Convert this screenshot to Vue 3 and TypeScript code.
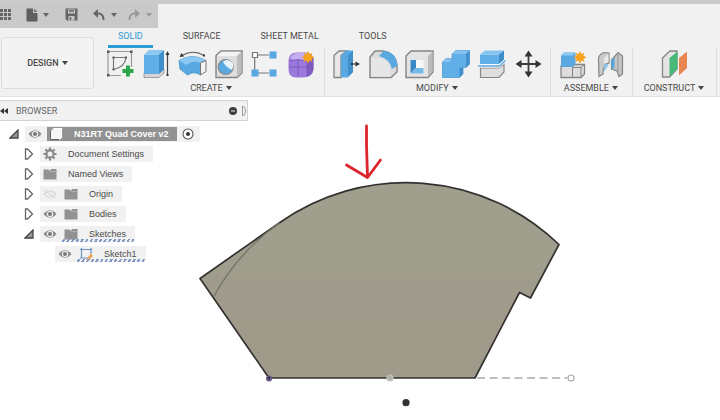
<script setup lang="ts">
import { ref } from 'vue'

interface Shape {
  d: string
  fill?: string
  stroke?: string
  w?: number
}
interface Tool {
  name: string
  shapes: Shape[]
}
interface Group {
  label: string
  tools: Tool[]
}
interface Node {
  label: string
  level: number
  open?: boolean
  leaf?: boolean
  eye?: 'on' | 'off'
  icon: 'part' | 'gear' | 'folder' | 'sketch'
  root?: boolean
  hatched?: boolean
}

const star = 'M25 2l1.6 3 3-1.3-1.2 3 3.1 1.6-3.1 1.6 1.2 3-3-1.3-1.6 3.1-1.6-3.1-3 1.3 1.2-3-3.1-1.6 3.1-1.6-1.2-3 3 1.3z'
const edge = '#858585'

const groups: Group[] = [
  {
    label: 'CREATE',
    tools: [
      {
        name: 'Create sketch',
        shapes: [
          { d: 'M5 2.5H28.500V18M5 2.500V26.500H18', stroke: '#9a9a9a' },
          { d: 'M10.500 8.500H23Q22 18 10.500 20.500Z', stroke: '#777' },
          { d: 'M4 1.500h2.500v2.500H4zM27 1.500h2.500v2.500H27zM4 25h2.500v2.500H4zM9.500 7.500h2v2h-2zM22 7.500h2v2h-2zM9.500 19.500h2v2h-2z', fill: '#555' },
          { d: 'M23 16.500h4V20h3.500v4H27v3.500h-4V24h-3.500v-4H23z', fill: '#2aa84a' }
        ]
      },
      {
        name: 'Extrude',
        shapes: [
          { d: 'M5 24H20L25 20V24L20 28.500H5Z', fill: '#d5d5d5', stroke: '#8c8c8c', w: 0.8 },
          { d: 'M5 5.500H20V25H5Z', fill: '#62aee6' },
          { d: 'M5 5.500L10 1H25L20 5.500Z', fill: '#8cc8f2' },
          { d: 'M20 5.500L25 1V20.500L20 25Z', fill: '#3f8fcb' },
          { d: 'M28.500 5V26', stroke: '#444' },
          { d: 'M28.500 2l2 4h-4zM27.500 25h2v2h-2z', fill: '#333' }
        ]
      },
      {
        name: 'Revolve',
        shapes: [
          { d: 'M7 6.500Q18 0 29 6.500', stroke: '#555' },
          { d: 'M4.500 8l2-4 2.500 3.500zM28 5.500h2v2h-2z', fill: '#333' },
          { d: 'M4 11.500Q17 3.500 31 11.500L25.500 14V26Q19 21.500 12.500 26L5 20Z', fill: '#5aa8e1', stroke: '#4490c8', w: 0.8 },
          { d: 'M4 11.500Q17 3.500 31 11.500L25.500 14Q18 10.500 11.500 16Z', fill: '#8bc7f1' },
          { d: 'M25.500 14L31 11.500V22.500L25.500 26Z', fill: '#f3f3f3', stroke: '#777', w: 1 }
        ]
      },
      {
        name: 'Hole',
        shapes: [
          { d: 'M5 6.500L10 2H31V24L26 28.500H5Z', fill: '#dedede', stroke: edge, w: 1.4 },
          { d: 'M6 7L10.500 2.800H30L25.500 7Z', fill: '#f3f3f3' },
          { d: 'M26 7L30.500 2.800V23.700L26 27.700Z', fill: '#bdbdbd' },
          { d: 'M7.200 18a7.500 7.500 0 1 0 15 0a7.500 7.500 0 1 0-15 0', fill: '#5aa8e1', stroke: '#888' },
          { d: 'M12 12.500Q14 18 21 21Q24 15 20 12.500Q16 9.500 12 12.500Z', fill: '#e7f2fa' }
        ]
      },
      {
        name: 'Pattern',
        shapes: [
          { d: 'M11 6H22M7.700 9V21M11 24H22', stroke: '#777' },
          { d: 'M5.500 3.500h5v5h-5z', fill: '#fff', stroke: '#777' },
          { d: 'M22.500 2.500h7v7h-7zM4.500 20.500h7v7h-7zM22.500 20.500h7v7h-7z', fill: '#58a7df' }
        ]
      },
      {
        name: 'Create form',
        shapes: [
          { d: 'M5.500 12Q5.500 3.500 14 3.500H23Q30.500 4 30.500 12V20Q30 28.500 20 28.500H13Q5.500 28.500 5.500 20Z', fill: '#9b78dc' },
          { d: 'M7 9Q10 4 15 4H23Q28 5 29 8L22 11H10Z', fill: '#c4acf0' },
          { d: 'M24 11L30.500 8V20Q29 26 24 27.500Z', fill: '#7e5bc2' },
          { d: 'M6 18H24L30 15M15 11V28M6 12Q15 9 24 12V27', stroke: '#7655b5', w: 0.8 },
          { d: star, fill: '#f6a21c' }
        ]
      }
    ]
  },
  {
    label: 'MODIFY',
    tools: [
      {
        name: 'Press pull',
        shapes: [
          { d: 'M5 6.500L10 2H18L12 6.500V28.500H5Z', fill: '#e7e7e7', stroke: edge, w: 1.3 },
          { d: 'M12 6.500L17 1.500H24V23L18.500 28.500H12Z', fill: '#5aa8e1' },
          { d: 'M19 6.500L24 1.500V23L19 28Z', fill: '#3f8fcb' },
          { d: 'M22 15H28', stroke: '#444' },
          { d: 'M31 15l-4.500-2.500v5zM22 14h2v2h-2z', fill: '#333' }
        ]
      },
      {
        name: 'Fillet',
        shapes: [
          { d: 'M5 8L10 2H18Q31 4 32 17V23L26 28.500H5Z', fill: '#dcdcdc', stroke: edge, w: 1.4 },
          { d: 'M6 8.500H12Q25 10 25.500 22V27.700H6Z', fill: '#e6e6e6' },
          { d: 'M14 7L19 1.800Q31.500 4 32.500 16.500L27 20Q25 10 14 7Z', fill: '#5aa8e1' }
        ]
      },
      {
        name: 'Shell',
        shapes: [
          { d: 'M5 7L10 2H32V23L27 28.500H5Z', fill: '#e4e4e4', stroke: edge, w: 1.4 },
          { d: 'M27 7L31.500 2.800V22.800L27 27.700Z', fill: '#bbb' },
          { d: 'M9.500 11H22.500V24.500H9.500Z', fill: '#f8f8f8' },
          { d: 'M9.500 11L15 11V19L9.500 24.500Z', fill: '#3987c4' },
          { d: 'M9.500 24.500L15 19H22.500V24.500Z', fill: '#74b9ea' }
        ]
      },
      {
        name: 'Combine',
        shapes: [
          { d: 'M5.500 13L9 9.500H15V5L19 1.500H32.500V15L29 18.500H26V25L22.500 28.500H5.500Z', fill: '#62aee6', stroke: '#4d9bd4', w: 0.8 },
          { d: 'M15 5L19 1.500H32.500L29 5ZM5.500 13L9 9.500H15L13 13Z', fill: '#83c1ee' },
          { d: 'M29 5L32.500 1.500V15L29 18.500ZM22.500 19L26 18.500V25L22.500 28.500Z', fill: '#4190cb' }
        ]
      },
      {
        name: 'Split body',
        shapes: [
          { d: 'M7.500 19H26L31 15.500V23L26 28.500H7.500Z', fill: '#dedede', stroke: edge },
          { d: 'M7 5.500H26V15H7Z', fill: '#62aee6' },
          { d: 'M7 5.500L12 1.500H31L26 5.500Z', fill: '#83c4f0' },
          { d: 'M26 5.500L31 1.500V10.500L26 15Z', fill: '#3d8dc9' },
          { d: 'M5 17H26.500L32.500 11.500', stroke: '#fff', w: 3 },
          { d: 'M5 17H26.500L32.500 11.500', stroke: '#58a7df', w: 1.5 }
        ]
      },
      {
        name: 'Move',
        shapes: [
          { d: 'M19.500 5V25M9.500 15H29.500', stroke: '#3c3c3c', w: 1.8 },
          { d: 'M19.500 1.500l4 6h-8zM19.500 28.500l4-6h-8zM6.500 15l6-4v8zM32.500 15l-6-4v8z', fill: '#333' }
        ]
      }
    ]
  },
  {
    label: 'ASSEMBLE',
    tools: [
      {
        name: 'New component',
        shapes: [
          { d: 'M6 17H17.500L20 15.500H29.500V25L26 28.500H6Z', fill: '#ddd', stroke: edge, w: 1.3 },
          { d: 'M17.500 18V28.500M18 18.500H26V28M26 18.500L29.500 15.500', stroke: edge, w: 1 },
          { d: 'M6 6.500L9 3.500H20.500V15L17.500 18H6Z', fill: '#5aa8e1' },
          { d: 'M6 6.500L9 3.500H20.500L17.500 6.500Z', fill: '#8fcaf3' },
          { d: star, fill: '#f6a21c' }
        ]
      },
      {
        name: 'Joint',
        shapes: [
          { d: 'M7.500 9Q9 4 14 3.500L18 4V14L14.500 15Q11.500 20 12 25L8 27.500Z', fill: '#cbcbcb', stroke: edge },
          { d: 'M13 9L17.500 5V13L13.500 15Z', fill: '#e9e9e9' },
          { d: 'M13.500 15Q17 14 17.500 16Q15 20 12.500 23Z', fill: '#8bc5ed' },
          { d: 'M31.500 7L27 3.500L20.500 11V20L26 22L28 27.500L31.500 25Z', fill: '#c5c5c5', stroke: edge },
          { d: 'M20.500 11L23.500 8V19L20.500 20Z', fill: '#58a7df' },
          { d: 'M27 4V23', stroke: '#999', w: 1 }
        ]
      }
    ]
  },
  {
    label: 'CONSTRUCT',
    tools: [
      {
        name: 'Offset plane',
        shapes: [
          { d: 'M6.500 9L14 2H21V20L13.500 28H6.500Z', fill: '#e4e4e4', stroke: edge, w: 1.3 },
          { d: 'M13.500 9L21.500 2.500V20L13.500 27.500Z', fill: '#48b878' },
          { d: 'M23 9L31 2.500V19L23 26.500Z', fill: '#ea8652' }
        ]
      }
    ]
  }
]

const tabs = ['SOLID', 'SURFACE', 'SHEET METAL', 'TOOLS']
const activeTab = ref('SOLID')

const nodes: Node[] = [
  { label: 'N31RT Quad Cover v2', level: 0, open: true, eye: 'on', icon: 'part', root: true },
  { label: 'Document Settings', level: 1, icon: 'gear' },
  { label: 'Named Views', level: 1, icon: 'folder' },
  { label: 'Origin', level: 1, eye: 'off', icon: 'folder' },
  { label: 'Bodies', level: 1, eye: 'on', icon: 'folder' },
  { label: 'Sketches', level: 1, open: true, eye: 'on', icon: 'folder', hatched: true },
  { label: 'Sketch1', level: 2, leaf: true, eye: 'on', icon: 'sketch', hatched: true }
]
</script>

<template>
  <div class="app">
    <header class="quickbar">
      <div class="quick">
        <button class="q grid" aria-label="Data panel">
          <svg width="12" height="12" viewBox="0 0 12 12"><path d="M0 0h3v3H0zM4 0h3v3H4zM8 0h3v3H8zM0 4h3v3H0zM4 4h3v3H4zM8 4h3v3H8zM0 8h3v3H0zM4 8h3v3H4zM8 8h3v3H8z" fill="#666" /></svg>
        </button>
        <button class="q file" aria-label="File">
          <svg width="12" height="14" viewBox="0 0 12 14"><path d="M0.500 0.500H7V5H11.500V13.500H0.500Z" fill="#5f5f5f" /><path d="M8 0.500L11.500 4H8Z" fill="#777" /></svg>
          <i class="caret"></i>
        </button>
        <button class="q save" aria-label="Save">
          <svg width="13" height="13" viewBox="0 0 13 13"><path d="M0.500 0.500H12.500V12.500H2L0.500 11Z" fill="#666" /><path d="M3 1.500h7v4H3zM3.500 8h6v4.500h-6z" fill="#c4c4c4" /><path d="M4 3h5M5.500 9v3" stroke="#666" stroke-width="1.500" /></svg>
        </button>
        <button class="q undo" aria-label="Undo">
          <svg width="12" height="12" viewBox="0 0 12 12"><path d="M3 4.500H6Q10.500 5 10.500 11" fill="none" stroke="#666" stroke-width="2" /><path d="M0 4.500L5 0V9Z" fill="#666" /></svg>
          <i class="caret"></i>
        </button>
        <button class="q redo" aria-label="Redo">
          <svg width="12" height="12" viewBox="0 0 12 12"><path d="M9 4.500H6Q1.500 5 1.500 11" fill="none" stroke="#999" stroke-width="2" /><path d="M12 4.500L7 0V9Z" fill="#999" /></svg>
          <i class="caret"></i>
        </button>
      </div>
    </header>

    <section class="ribbon">
      <button class="workspace">DESIGN <i class="caret small"></i></button>
      <div class="tools">
        <nav class="tabs">
          <button v-for="t in tabs" :key="t" class="tab" :class="{ active: t === activeTab }" @click="activeTab = t">{{ t }}</button>
        </nav>
        <div class="groups">
          <div v-for="g in groups" :key="g.label" class="group">
            <div class="icons">
              <button v-for="t in g.tools" :key="t.name" class="tool" :aria-label="t.name">
                <svg width="36" height="30" viewBox="0 0 36 30">
                  <path v-for="(s, i) in t.shapes" :key="i" :d="s.d" :fill="s.fill ?? 'none'" :stroke="s.stroke ?? 'none'" :stroke-width="s.w ?? 1.2" />
                </svg>
              </button>
            </div>
            <button class="group-label">{{ g.label }} <i class="caret small"></i></button>
          </div>
        </div>
      </div>
    </section>

    <main class="canvas">
      <svg class="drawing" viewBox="0 98 720 322" preserveAspectRatio="xMinYMin meet">
        <defs>
          <linearGradient id="face" x1="0" y1="0" x2="0" y2="1">
            <stop offset="0.350" stop-color="#a09e8d" />
            <stop offset="0.700" stop-color="#a09a8b" />
          </linearGradient>
        </defs>
        <path d="M269 378L200 278.500L279.500 222.700A220 220 0 0 1 559 244.500L530.500 298L519.500 292.500L475 378Z" fill="url(#face)" stroke="#333230" stroke-width="1.700" stroke-linejoin="round" />
        <path d="M213.500 297A220 220 0 0 1 279.500 222.700" fill="none" stroke="#77756a" stroke-width="1.400" />
        <path d="M477 378H567" stroke="#aaa" stroke-width="1.500" stroke-dasharray="8 4.500" />
        <circle cx="571" cy="378" r="3" fill="#fff" stroke="#aaa" stroke-width="1.200" />
        <circle cx="390" cy="378" r="3" fill="#b5b2a6" stroke="#c4c4c0" stroke-width="1.200" />
        <circle cx="269" cy="378.500" r="3" fill="#67558c" />
        <circle cx="269" cy="378" r="1.200" fill="#333" />
        <circle cx="406" cy="402.700" r="3.600" fill="#333" />
        <path d="M366.500 126L366.500 145L367.500 177M346.500 165L367.500 177.500L380.500 160" fill="none" stroke="#dc252d" stroke-width="2.800" stroke-linecap="round" stroke-linejoin="round" />
      </svg>

      <aside class="browser">
        <div class="browser-head">
          <svg width="8" height="6" viewBox="0 0 8 6"><path d="M4 0V6L0 3ZM8 0V6L4 3Z" fill="#333" /></svg>
          <span class="browser-title">BROWSER</span>
          <button class="collapse" aria-label="Minimise">
            <svg width="8" height="8" viewBox="0 0 8 8"><circle cx="4" cy="4" r="4" fill="#3d3d3d" /><path d="M2 4H6" stroke="#eee" /></svg>
          </button>
          <svg width="4" height="12" viewBox="0 0 4 12"><path d="M0.500 1V11M1 1Q3.500 3 3.500 6T1 11" fill="none" stroke="#999" /></svg>
        </div>
        <ul class="tree">
          <li v-for="n in nodes" :key="n.label" class="node" :class="['level-' + n.level, { root: n.root }]">
            <button v-if="!n.leaf" class="twisty" :aria-label="'Toggle ' + n.label">
              <svg v-if="n.open" width="10" height="10" viewBox="0 0 10 10"><path d="M9 1V9H1Z" fill="#999" stroke="#444" stroke-width="1.300" /></svg>
              <svg v-else width="10" height="12" viewBox="0 0 10 12"><path d="M1.500 1V11H3.500L8.500 6L3.500 1Z" fill="#fff" stroke="#666" stroke-width="1.300" /></svg>
            </button>
            <div class="item" :class="{ hatched: n.hatched }">
              <button v-if="n.eye" class="eye" :aria-label="'Visibility of ' + n.label">
                <svg width="14" height="10" viewBox="0 0 14 10">
                  <template v-if="n.eye === 'on'">
                    <path d="M0.500 5Q7-2.500 13.500 5Q7 12.500 0.500 5Z" fill="#8c8c8c" />
                    <circle cx="7" cy="5" r="2.600" fill="#777" stroke="#eee" stroke-width="1.200" />
                  </template>
                  <path v-else d="M1 5Q7-1 13 5Q7 11 1 5ZM2 1L12 9" fill="none" stroke="#dadada" stroke-width="1.200" />
                </svg>
              </button>
              <span class="entry">
                <svg v-if="n.icon === 'part'" width="14" height="14" viewBox="0 0 14 14"><path d="M1.500 4L4 1.500H12.500V10.500L10 12.500H1.500Z" fill="#f6f6f6" stroke="#fff" stroke-width="1.200" /><path d="M1.500 12.500V4L4 1.500M1.500 12.500H10" fill="none" stroke="#5e5e5e" /></svg>
                <svg v-else-if="n.icon === 'gear'" width="14" height="14" viewBox="0 0 14 14"><circle cx="7" cy="7" r="3.600" fill="none" stroke="#8a8a8a" stroke-width="2.200" /><path d="M7 0.500V3M7 11V13.500M0.500 7H3M11 7H13.500M2.400 2.400L4 4M10 10L11.600 11.600M11.600 2.400L10 4M4 10L2.400 11.600" stroke="#8a8a8a" stroke-width="2.200" /></svg>
                <svg v-else-if="n.icon === 'folder'" width="14" height="12" viewBox="0 0 14 12"><path d="M0.500 1.500H5.500L7 3V2.500L8.500 1H13.500V11.500H0.500Z" fill="#929292" /><path d="M7 3.500H13.500" stroke="#b4b4b4" stroke-width="0.800" /></svg>
                <svg v-else width="14" height="13" viewBox="0 0 14 13"><path d="M2.500 0V10M1 1.500H13M12 0V6M1 10H9" fill="none" stroke="#6b94c4" stroke-width="1.200" /><path d="M7 11.500L12 5.500L14 8L10 12Z" fill="#eda65c" /></svg>
                <span class="label">{{ n.label }}</span>
              </span>
              <svg v-if="n.root" class="active-mark" width="12" height="12" viewBox="0 0 12 12"><circle cx="6" cy="6" r="5" fill="#fff" stroke="#555" stroke-width="1.100" /><circle cx="6" cy="6" r="2" fill="#333" /></svg>
            </div>
          </li>
        </ul>
      </aside>
    </main>
  </div>
</template>

<style>
body {
  margin: 0;
  background: #fff;
}
</style>

<style scoped>
.app {
  display: flex;
  flex-direction: column;
  min-height: 100vh;
  font-family: Roboto, "Liberation Sans", sans-serif;
  font-size: 9px;
  line-height: 12px;
  color: #4a4a4a;
}
button {
  margin: 0;
  padding: 0;
  border: 0;
  background: none;
  font: inherit;
  color: inherit;
  cursor: pointer;
}
svg {
  display: block;
  flex: none;
}
.quickbar {
  display: flex;
  border-top: 4px solid #cbcbcb;
  background: #f1f1f1;
}
.quick {
  display: flex;
  align-items: center;
  height: 24px;
  padding: 0 6px 3px 0;
  box-sizing: border-box;
  background: #c9c9c9;
}
.q {
  display: flex;
  align-items: center;
  gap: 5px;
}
.file {
  margin-left: 14px;
}
.save {
  margin-left: 16px;
}
.undo,
.redo {
  gap: 6px;
}
.undo {
  margin-left: 15px;
}
.redo {
  margin-left: 11px;
}
.caret {
  width: 0;
  border: 3px solid transparent;
  border-top: 4px solid #666;
  border-bottom: 0;
}
.redo .caret {
  border-top-color: #999;
}
.caret.small {
  display: inline-block;
  margin-left: 1px;
  border-top-color: #444;
  vertical-align: 1px;
}
.ribbon {
  display: flex;
  gap: 5px;
  background: #f1f1f1;
  border-bottom: 1px solid #e2e2e2;
}
.workspace {
  align-self: flex-start;
  width: 93px;
  height: 52px;
  margin: 9px 0 0 1px;
  border: 1px solid #dcdcdc;
  border-radius: 3px;
  background: #f3f3f3;
  font-weight: 500;
}
.tools {
  flex: 1;
  min-width: 0;
}
.tabs {
  display: flex;
  height: 20px;
  padding-left: 9px;
}
.tab {
  box-sizing: border-box;
  height: 20px;
  padding: 0 10px 2px;
  border-bottom: 3px solid transparent;
  margin-right: 20px;
}
.tab.active {
  color: #2d9bd2;
  border-bottom-color: #2d9bd2;
}
.groups {
  display: flex;
}
.group {
  box-sizing: border-box;
  display: flex;
  flex-direction: column;
  align-items: center;
  min-width: 82px;
  height: 48px;
  padding: 1px 5px 0 4px;
  border-right: 1px solid #dedede;
}
.group:last-child {
  min-width: 84px;
}
.icons {
  display: flex;
}
.tool {
  width: 36px;
  height: 30px;
}
.group-label {
  height: 12px;
  margin-top: 3px;
  white-space: nowrap;
}
.canvas {
  position: relative;
  flex: 1;
  padding-top: 3px;
  background: #fff;
}
.drawing {
  position: absolute;
  left: 0;
  top: 1px;
  width: 100%;
}
.browser {
  position: relative;
  width: 248px;
}
.browser-head {
  display: flex;
  align-items: center;
  height: 21px;
  padding-right: 1px;
  border: 1px solid #d4d4d4;
  border-left: 0;
  box-sizing: border-box;
  background: #f1f1f1;
  color: #666;
}
.browser-title {
  flex: 1;
  margin-left: 8px;
}
.collapse {
  margin-right: 5px;
}
.tree {
  list-style: none;
  margin: 0;
  padding: 3px 0 0;
  font-family: "Liberation Sans", Arial, sans-serif;
}
.node {
  display: flex;
  align-items: center;
  height: 20px;
}
.level-0 {
  padding-left: 9px;
}
.level-1 {
  padding-left: 24px;
}
.level-2 {
  padding-left: 55px;
}
.twisty {
  width: 16px;
}
.item {
  display: flex;
  align-items: center;
  gap: 7px;
  height: 16px;
  padding: 0 9px 0 3px;
  background: #f1f1f1;
}
.entry {
  position: relative;
  display: flex;
  align-items: center;
  gap: 11px;
  height: 14px;
}
.root .entry {
  padding: 0 8px 0 2px;
  background: #929292;
  color: #fff;
  font-weight: bold;
}
.root .item {
  gap: 5px;
  padding-right: 6px;
}
.hatched .entry::after {
  content: "";
  position: absolute;
  left: -3px;
  right: -8px;
  bottom: -1px;
  height: 3px;
  background: repeating-linear-gradient(120deg, transparent 0 2px, #8299c6 2px 4px);
}
</style>
